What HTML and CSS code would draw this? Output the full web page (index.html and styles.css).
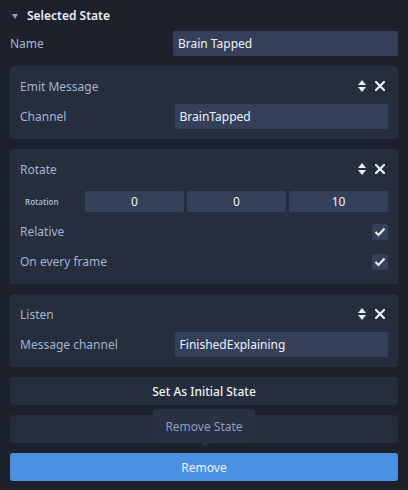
FILE: index.html
```html
<!DOCTYPE html>
<html>
<head>
<meta charset="utf-8">
<link rel="stylesheet" href="styles.css">
</head>
<body>
<div class="panel">
  <div class="section-head">
    <span class="caret"></span>
    <span class="section-title">Selected State</span>
  </div>
  <div class="row">
    <span class="label">Name</span>
    <div class="input">Brain Tapped</div>
  </div>

  <div class="card">
    <div class="card-head">
      <span class="label">Emit Message</span>
      <div class="tools">
        <svg class="sort" width="8" height="12" viewBox="0 0 8 12"><path d="M4 0 L8 5 L0 5 Z M0 7 L8 7 L4 12 Z" fill="#e6edf7"/></svg>
        <svg class="close" width="10" height="10" viewBox="0 0 10 10"><path d="M1 1 L9 9 M9 1 L1 9" stroke="#e6edf7" stroke-width="2.2" stroke-linecap="square"/></svg>
      </div>
    </div>
    <div class="row">
      <span class="label">Channel</span>
      <div class="input">BrainTapped</div>
    </div>
  </div>

  <div class="card">
    <div class="card-head">
      <span class="label">Rotate</span>
      <div class="tools">
        <svg class="sort" width="8" height="12" viewBox="0 0 8 12"><path d="M4 0 L8 5 L0 5 Z M0 7 L8 7 L4 12 Z" fill="#e6edf7"/></svg>
        <svg class="close" width="10" height="10" viewBox="0 0 10 10"><path d="M1 1 L9 9 M9 1 L1 9" stroke="#e6edf7" stroke-width="2.2" stroke-linecap="square"/></svg>
      </div>
    </div>
    <div class="row rot-row">
      <span class="small-label">Rotation</span>
      <div class="vec">
        <div class="num">0</div>
        <div class="num">0</div>
        <div class="num">10</div>
      </div>
    </div>
    <div class="row check-row">
      <span class="label">Relative</span>
      <span class="check"><svg width="12" height="10" viewBox="0 0 12 10"><path d="M1.5 5 L4.5 8 L10.5 1.5" fill="none" stroke="#f2f6fb" stroke-width="2"/></svg></span>
    </div>
    <div class="row check-row">
      <span class="label">On every frame</span>
      <span class="check"><svg width="12" height="10" viewBox="0 0 12 10"><path d="M1.5 5 L4.5 8 L10.5 1.5" fill="none" stroke="#f2f6fb" stroke-width="2"/></svg></span>
    </div>
  </div>

  <div class="card">
    <div class="card-head">
      <span class="label">Listen</span>
      <div class="tools">
        <svg class="sort" width="8" height="12" viewBox="0 0 8 12"><path d="M4 0 L8 5 L0 5 Z M0 7 L8 7 L4 12 Z" fill="#e6edf7"/></svg>
        <svg class="close" width="10" height="10" viewBox="0 0 10 10"><path d="M1 1 L9 9 M9 1 L1 9" stroke="#e6edf7" stroke-width="2.2" stroke-linecap="square"/></svg>
      </div>
    </div>
    <div class="row">
      <span class="label">Message channel</span>
      <div class="input">FinishedExplaining</div>
    </div>
  </div>

  <div class="btn btn-dark btn-strong">Set As Initial State</div>
  <div class="btn btn-dark btn-tip-host">
    <div class="tooltip">Remove State</div>
  </div>
  <div class="btn btn-blue">Remove</div>
</div>
</body>
</html>
```

FILE: styles.css
```css
* { box-sizing: border-box; }
html, body { margin: 0; padding: 0; }
body {
  background: #1d212b;
  font-family: "Noto Sans", "Open Sans", sans-serif;
  font-size: 12px;
  font-weight: 400;
  color: #a2b4d2;
  width: 408px;
  height: 490px;
  overflow: hidden;
}
.panel {
  padding: 0 10px 10px 10px;
  display: flex;
  flex-direction: column;
}
.section-head {
  height: 31px;
  display: flex;
  align-items: center;
  padding-left: 2px;
}
.caret {
  width: 0; height: 0;
  border-left: 3.5px solid transparent;
  border-right: 3.5px solid transparent;
  border-top: 5px solid #8ea3c6;
  margin-right: 9px;
  margin-top: 1px;
}
.section-title {
  color: #e9eef7;
  font-weight: 600;
  font-size: 12px;
}
.row {
  display: flex;
  align-items: center;
  height: 25px;
}
.label {
  flex: 1;
  color: #a2b4d2;
}
.input {
  width: 58%;
  height: 25px;
  background: #34405a;
  border-radius: 2px;
  color: #eef2f8;
  padding-left: 5px;
  display: flex;
  align-items: center;
}
.card {
  margin-top: 10px;
  background: #262d3d;
  border-radius: 3px;
  padding: 10px;
  display: flex;
  flex-direction: column;
}
.card-head {
  height: 20px;
  display: flex;
  align-items: center;
  margin-bottom: 8px;
}
.tools {
  display: flex;
  align-items: center;
  gap: 9px;
  padding-right: 3px;
}
.rot-row { margin-top: 2px; }
.small-label {
  font-size: 8px;
  font-weight: 600;
  color: #9fb1cf;
  width: 65px;
  padding-left: 5px;
}
.vec {
  flex: 1;
  display: flex;
  gap: 3px;
}
.num {
  flex: 1;
  height: 21px;
  background: #34405a;
  border-radius: 2px;
  color: #eef2f8;
  display: flex;
  align-items: center;
  justify-content: center;
}
.check-row { margin-top: 5px; }
.check {
  width: 16px;
  height: 16px;
  background: #34405a;
  border-radius: 2px;
  display: flex;
  align-items: center;
  justify-content: center;
}
.btn {
  margin-top: 10px;
  height: 28px;
  border-radius: 3px;
  display: flex;
  align-items: center;
  justify-content: center;
}
.btn-dark { background: #252c3b; }
.btn-strong { color: #eef2f8; font-weight: 500; }
.btn-tip-host { position: relative; }
.tooltip {
  position: absolute;
  left: 143px;
  top: -6px;
  width: 102px;
  height: 34px;
  background: #283041;
  border-radius: 3px;
  color: #8b9fc0;
  display: flex;
  align-items: center;
  justify-content: center;
}
.tooltip::after {
  content: "";
  position: absolute;
  left: 48px;
  bottom: -4px;
  border-left: 4px solid transparent;
  border-right: 4px solid transparent;
  border-top: 4px solid #283041;
}
.btn-blue {
  background: #4a90e2;
  color: #eef4fc;
}
```
